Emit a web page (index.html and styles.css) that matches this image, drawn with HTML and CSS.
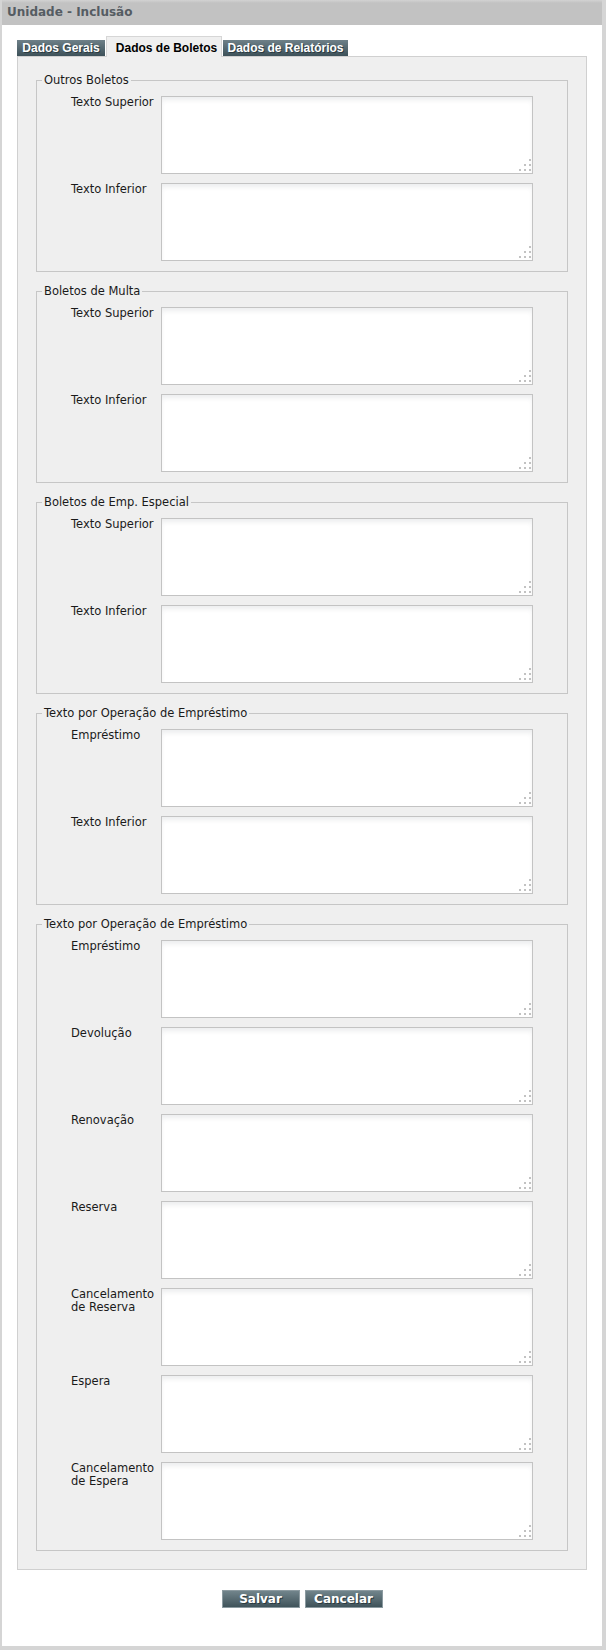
FILE: index.html
```html
<!DOCTYPE html>
<html lang="pt-BR">
<head>
  <meta charset="UTF-8">
  <meta name="viewport" content="width=device-width, initial-scale=1.0">
  <title>Unidade - Inclusão</title>
  <link rel="stylesheet" href="styles.css">
</head>
<body>

  <div class="window">
    <h1 class="title">Unidade - Inclusão</h1>

    <ul class="tabs">
      <li class="tab tab-gerais">Dados Gerais</li>
      <li class="tab tab-boletos active">Dados de Boletos</li>
      <li class="tab tab-relatorios">Dados de Relatórios</li>
    </ul>

    <div class="panel">
      <fieldset>
        <legend>Outros Boletos</legend>
        <div class="row">
          <label class="label">Texto Superior</label>
          <span class="box"><textarea></textarea></span>
        </div>
        <div class="row">
          <label class="label">Texto Inferior</label>
          <span class="box"><textarea></textarea></span>
        </div>
      </fieldset>

      <fieldset>
        <legend>Boletos de Multa</legend>
        <div class="row">
          <label class="label">Texto Superior</label>
          <span class="box"><textarea></textarea></span>
        </div>
        <div class="row">
          <label class="label">Texto Inferior</label>
          <span class="box"><textarea></textarea></span>
        </div>
      </fieldset>

      <fieldset>
        <legend>Boletos de Emp. Especial</legend>
        <div class="row">
          <label class="label">Texto Superior</label>
          <span class="box"><textarea></textarea></span>
        </div>
        <div class="row">
          <label class="label">Texto Inferior</label>
          <span class="box"><textarea></textarea></span>
        </div>
      </fieldset>

      <fieldset>
        <legend>Texto por Operação de Empréstimo</legend>
        <div class="row">
          <label class="label">Empréstimo</label>
          <span class="box"><textarea></textarea></span>
        </div>
        <div class="row">
          <label class="label">Texto Inferior</label>
          <span class="box"><textarea></textarea></span>
        </div>
      </fieldset>

      <fieldset>
        <legend>Texto por Operação de Empréstimo</legend>
        <div class="row">
          <label class="label">Empréstimo</label>
          <span class="box"><textarea></textarea></span>
        </div>
        <div class="row">
          <label class="label">Devolução</label>
          <span class="box"><textarea></textarea></span>
        </div>
        <div class="row">
          <label class="label">Renovação</label>
          <span class="box"><textarea></textarea></span>
        </div>
        <div class="row">
          <label class="label">Reserva</label>
          <span class="box"><textarea></textarea></span>
        </div>
        <div class="row">
          <label class="label">Cancelamento de Reserva</label>
          <span class="box"><textarea></textarea></span>
        </div>
        <div class="row">
          <label class="label">Espera</label>
          <span class="box"><textarea></textarea></span>
        </div>
        <div class="row">
          <label class="label">Cancelamento de Espera</label>
          <span class="box"><textarea></textarea></span>
        </div>
      </fieldset>
    </div>

    <div class="actions">
      <button class="btn">Salvar</button>
      <button class="btn">Cancelar</button>
    </div>
  </div>

</body>
</html>
```

FILE: styles.css
```css
body {
  margin: 0;
  background: #fff;
  font-family: "DejaVu Sans", Verdana, sans-serif;
  font-size: 11.5px;
  color: #1a1a1a;
}

.window {
  background: #fff;
  border: solid #d5d5d5;
  border-width: 0 4px 4px 2px;
  padding-bottom: 38px;
}

.title {
  margin: 0;
  height: 25px;
  padding-left: 5px;
  background: linear-gradient(#d2d2d2, #c2c2c2 3px);
  color: #555c62;
  font-size: 12px;
  font-weight: bold;
  line-height: 25px;
}

/* tabs */
.tabs {
  list-style-type: none;
  display: flex;
  align-items: flex-end;
  gap: 1px;
  height: 21px;
  margin: 11px 0 -1px 15px;
  padding: 0;
}

.tab {
  height: 16px;
  margin-bottom: 1px;
  background: linear-gradient(#6e8088, #3d5159);
  color: #fff;
  font-family: "Liberation Sans", Arial, sans-serif;
  font-size: 12px;
  font-weight: bold;
  line-height: 16px;
  text-align: center;
  text-shadow: 1px 1px 0 #2b3a40;
}

.tab-gerais {
  width: 88px;
}

.tab-relatorios {
  width: 125px;
}

.tab.active {
  position: relative;
  z-index: 1;
  box-sizing: border-box;
  width: 116px;
  height: 21px;
  margin-bottom: 0;
  padding: 3px 0 0 5px;
  border: 1px solid #d6d6d6;
  border-bottom: none;
  background: #efefef;
  color: #000;
  text-shadow: none;
}

/* panel */
.panel {
  margin: 0 15px;
  padding: 16px 18px 18px;
  background: #efefef;
  border: 1px solid #d0d0d0;
}

fieldset {
  margin: 0 0 12px;
  padding: 9px 0 10px 5px;
  min-width: 0;
  border: 1px solid #c6c6c6;
}

fieldset:last-child {
  margin-bottom: 0;
}

legend {
  padding: 0 2px;
  line-height: 14px;
}

.row {
  display: flex;
  align-items: flex-start;
  margin-left: 29px;
}

.row + .row {
  margin-top: 9px;
}

.label {
  width: 87px;
  margin-right: 3px;
  line-height: 13px;
}

.box {
  position: relative;
  display: block;
  width: 372px;
  height: 78px;
}

.box textarea {
  display: block;
  box-sizing: border-box;
  width: 100%;
  height: 100%;
  margin: 0;
  border: 1px solid #c3c3c3;
  background: #fff;
  box-shadow: inset 0 4px 5px -1px rgba(40, 60, 70, 0.09);
  resize: none;
  outline: none;
}

/* resize grip dots */
.box::after {
  content: "";
  position: absolute;
  right: 2px;
  bottom: 3px;
  width: 2px;
  height: 2px;
  background: #c2c2c2;
  box-shadow: -5px 0 #c2c2c2, -10px 0 #c2c2c2, 0 -5px #c2c2c2, -5px -5px #c2c2c2, 0 -10px #c2c2c2;
}

/* buttons */
.actions {
  display: flex;
  justify-content: center;
  gap: 5px;
  margin-top: 20px;
}

.btn {
  box-sizing: border-box;
  width: 78px;
  height: 18px;
  padding: 0;
  border: 1px solid #8b9aa0;
  background: linear-gradient(#71848b, #3f535a);
  color: #fff;
  font-family: "DejaVu Sans", Verdana, sans-serif;
  font-size: 12px;
  font-weight: bold;
  line-height: 16px;
  text-shadow: 1px 1px 0 #2b3a40;
  cursor: pointer;
}
```
